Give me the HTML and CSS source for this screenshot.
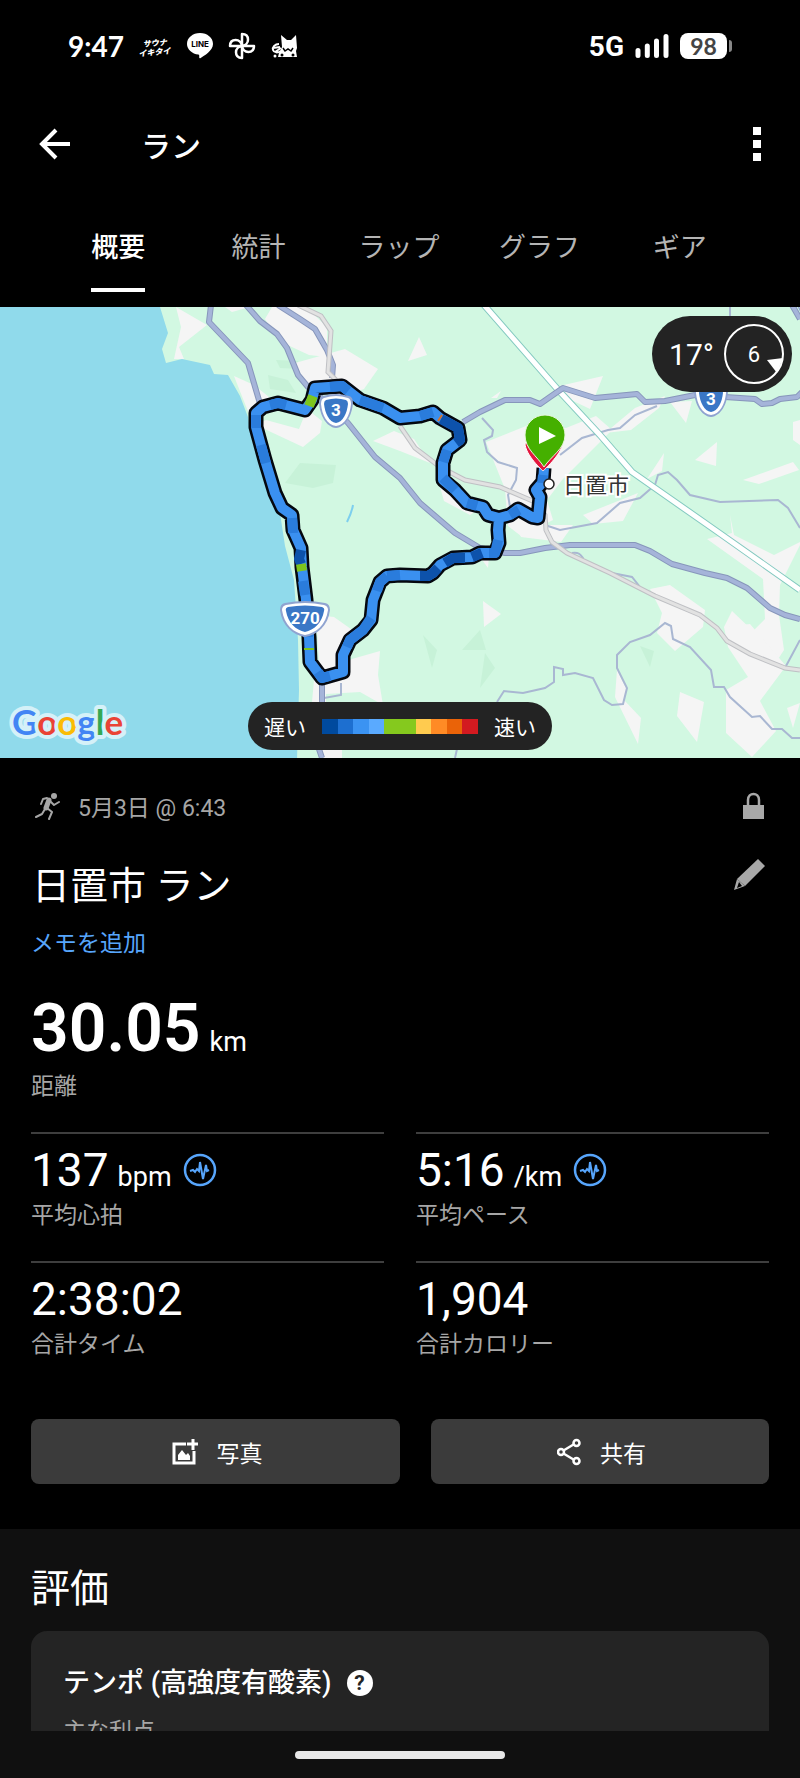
FILE: index.html
```html
<!DOCTYPE html>
<html lang="ja">
<head>
  <meta charset="UTF-8">
  <meta name="viewport" content="width=device-width, initial-scale=1.0">
  <title>日置市 ラン</title>
  <link rel="stylesheet" href="styles.css">
</head>
<body>
  <div class="app">
    <div class="status-bar">
      <div class="status-left">
        <span class="clock">9:47</span>
        <svg class="icon-sauna" width="34" height="26" viewBox="0 0 34 26">
          <g transform="rotate(-5 17 13)">
            <text x="5" y="13">サウナ</text>
            <text x="0" y="22">イキタイ</text>
          </g>
        </svg>
        <svg class="icon-line" width="28" height="28" viewBox="0 0 28 28">
          <path d="M14 1C6.800 1 1 5.700 1 12c0 5.500 5 9.800 11.500 10.600 1 .3.800 1.500.7 2.600 0 .9.500 1.300 1.500.7C18 24 27 18.500 27 12 27 5.700 21.200 1 14 1z" fill="#fff"/>
          <text x="14" y="15" text-anchor="middle">LINE</text>
        </svg>
        <svg width="28" height="28" viewBox="0 0 28 28" fill="none" stroke="#fff" stroke-width="2.5" stroke-linejoin="round">
          <path d="M14 14V2c4 0 6 2.500 6 5.700S17.500 13.500 14 14z"/>
          <path d="M14 14h12c0 4-2.500 6-5.700 6S14.500 17.500 14 14z"/>
          <path d="M14 14v12c-4 0-6-2.500-6-5.700S10.500 14.500 14 14z"/>
          <path d="M14 14H2c0-4 2.500-6 5.700-6S13.500 10.500 14 14z"/>
        </svg>
        <svg width="28" height="28" viewBox="0 0 28 28">
          <path d="M11 3l6 5h4l5-5 1 13-1 3 1 6H8l1-4 3-6z" fill="#fff"/>
          <path d="M9 12c-4 0-7 3-6 6 1 3 5 3 8 1M3 16l7-1M5 20l6-4" fill="none" stroke="#fff" stroke-width="2"/>
          <path d="M13 16l2 3 3-2 3 2 2-3" fill="none" stroke="#000" stroke-width="1.5"/>
          <circle cx="12" cy="23" r="1.5"/>
          <circle cx="23" cy="23" r="1.5"/>
          <circle cx="5" cy="24" r="1.5" fill="#fff"/>
        </svg>
      </div>
      <div class="status-right">
        <span class="network">5G</span>
        <svg width="34" height="26" viewBox="0 0 34 26" stroke="#fff" stroke-width="5" stroke-linecap="round">
          <path d="M3 17.500v5M12.300 13v9.500M21.500 8v14.500M31 3.500v19"/>
        </svg>
        <span class="battery">98</span>
      </div>
    </div>

    <header class="header">
      <button class="icon-button" aria-label="戻る">
        <svg width="32" height="32" viewBox="0 0 32 32" fill="none" stroke="#fff" stroke-width="4">
          <path d="M31 16H4M17 2L3 16l14 14"/>
        </svg>
      </button>
      <h1 class="header-title">ラン</h1>
      <button class="icon-button" aria-label="メニュー">
        <svg width="8" height="36" viewBox="0 0 8 36" fill="#fff">
          <path d="M0 1h8v8H0zM0 14h8v8H0zM0 27h8v8H0z"/>
        </svg>
      </button>
    </header>

    <nav class="tabs">
      <button class="tab active">概要</button>
      <button class="tab">統計</button>
      <button class="tab">ラップ</button>
      <button class="tab">グラフ</button>
      <button class="tab">ギア</button>
    </nav>

    <div class="map">
      <svg class="map-svg" viewBox="0 307 800 451" preserveAspectRatio="xMidYMid slice">
        <defs>
          <g id="shield">
            <path d="M-13-14Q0-18 13-14 17-13 17-7C16 5 10 17 0 18-10 17-16 5-17-7Q-17-13-13-14z" fill="#8fa3d0"/>
            <path d="M-12-12Q0-16 12-12 15-11 15-6C14 5 9 15 0 16-9 15-14 5-15-6Q-15-11-12-12z" fill="#fff"/>
            <path d="M-10-10Q0-13 10-10 12-9 12-6C11 3 7 12 0 13-7 12-11 3-12-6Q-12-9-10-10z" fill="#3a77c6"/>
          </g>
          <path id="road-coast" d="M211 305l-2 17 39 41 13 44M322 683v20M319 749l3 9"/>
          <path id="road-main" d="M246 305l14 16 17 13 10 14 11 27 10 12 22 18 18 18 27 34 25 21 20 25 35 30 25 15 25 5h15l25-5 25-3h65l15 6 22 13 33 9 22 5 20 10 23 20 15 7 15 4"/>
          <path id="road-north" d="M278 305l22 14 15 10 12 21 6 15-1 13"/>
          <path id="road-east" d="M463 422l17-10 25-12h25l10 4 10-7 13-9 32 10 42-4 8 8 20-1 30-6 60 4 7 5 10-1 8-4 17-2 5-5M792 305l8 14"/>
          <path id="road-grey" d="M298 305l23 11 10 15-3 41 8 8M400 426l15 22 25 19 25 13 35 7 35 15 10 13 1 15 6 12 15 11 43 20 45 23 45 19 17 13 10 13 23 13 35 14 15 2"/>
          <path id="rail" d="M484 305l76 87 40 43 32 37 83 58 85 60"/>
          <path id="track" d="M544 468l-1 14-7 8 4 7-2 21-6-1-14-8-8 6-11 3-1 12 1 13-4 10h-15l-8 4-19 1-13 7-7 8-5 3-28-1-13 1-7 6-7 18-2 20-8 10-13 10-7 15v17l-21 6-12-16-1-25-3-37-4-33-1-19-8-18-1-15-10-7-7-15-10-33-9-33v-14l7-6 15-4 27 7 7-10 3-12 27-2 18 14 23 8 17 10 20-2 13-4 7 6 18 10 2 12-13 10-4 13v17l12 10 12 13 16 4 5 8 11 3"/>
        </defs>
        <rect x="0" y="307" width="800" height="452" fill="#d2f8e2"/>

        <!-- darker vegetation -->
        <g fill="#c7f2d8">
          <path d="M285 483l15-20 36 2-3 18-20 5z"/>
          <path d="M276 360l22 1 2 8-20-1zM268 375l20 5 8 13-26-4z"/>
          <path d="M462 650l18-20 6 20zM423 635l14 15-5 18zM640 646l14 5-4 16zM485 653l10 15-15 20z"/>
        </g>

        <!-- built-up areas -->
        <g fill="#f5f5f5">
          <path d="M176 307l31 18-28 22 5 12h-10l7-32z"/>
          <path d="M225 307h25l-18 5zM272 307h34l21 20v30l-18-2-30-14-14-22z"/>
          <path d="M295 363l50-14 33 20-14 20-24 8-32-9z"/>
          <path d="M234 376l20 9 20 16-25 13z"/>
          <path d="M256 425l10-5 33 9 8-20 15 12-2 12-17 14z"/>
          <path d="M373 441l21-10 20 8 16 24-30-12z"/>
          <path d="M408 361l11-24 8 18zM491 398l10-7-4 7z"/>
          <path d="M555 387l48-11-13 33-25-12z"/>
          <path d="M486 442l45-18 35 4 30-12 16 14-50 50-15 20 6 20-32 16-13-10-3-37z"/>
          <path d="M605 433l30-25 30-12-6 12-28 22zM670 402l22-1-6 22z"/>
          <path d="M695 460l22-18-1 24zM743 480l50-18 6 8-40 14zM793 422l7-2v25l-7-5z"/>
          <path d="M647 479l17-26-2 18zM583 515l55-22-15 28-30 3z"/>
          <path d="M440 487l4 14 26 14 15-10zM516 525h57l-12 17-40-5zM480 557l9-1-1 12z"/>
          <path d="M483 601l18 13-17 13zM730 515l4 20 40 20 26-13v3l-20 40-1 30 5 35-13 20-20-10-10-13-17-20 8-16 21 20 12-12-2-40-28-20-28-20 25-6z"/>
          <path d="M650 589l20-4 35 25-2 17-28 24-18-18 5-20z"/>
          <path d="M724 627l26-3 36 42-26 35 16 30-24 26-26-24v-43l22-13-20-30z"/>
          <path d="M617 670l10 20-3 10 17 18-3 26-23-47zM680 692l24 10-7 40-20-26zM787 708l13-5-7 25z"/>
          <path d="M316 615l18 2 24 17-7 14-9 24-22 5z"/>
          <path d="M352 659l28-8-2 24 5 30-23-13-34 2v10l-14-2 2-22 20-10zM322 750h20v8h-20z"/>
        </g>
        <path d="M353 505c-1 6-3 11-6 17" fill="none" stroke="#7dcfee" stroke-width="2"/>

        <!-- sea -->
        <path d="M0 307h160l8 26-6 16 4 14 16-4 28 6 4 9 14 1 12 21 8 21 4 23 12 40 16 33 5 33 9 34 4 60 1 50-2 70H0z" fill="#90daeb"/>

        <!-- local roads -->
        <g fill="none" stroke="#a9b7d2" stroke-width="2">
          <path d="M482 418l11 12-1 6-8 4 3 12 11 10 19 6-1 12-8 15 2 12"/>
          <path d="M560 455l22-17 26-8 12-2 15-13 22-9M730 307v10"/>
          <path d="M545 525l15 5 37-7 23-20 20-5 15-13 3-10 10-3 9 8 13 15 30 7 58-2 10 8 12 20"/>
          <path d="M497 702l7-11 19 2 22-5 9-6v-15l9 2v6l12-2 18 5 11 22 8 5 11-1 4-16-10-20v-13l13-13 20-7 15-12 6 3 2 13 17 8 21 23 3 17h10l6 10 22 20 8-1 12 13h10l10 9h8"/>
          <path d="M341 683v12l-17 3M457 749l-2 9M786 666l14-26M572 553c10-2 10 6 12 6M612 573l20 4 8 10"/>
        </g>

        <!-- railway -->
        <g fill="none">
          <use href="#rail" stroke="#83c9c0" stroke-width="7"/>
          <use href="#rail" stroke="#fff" stroke-width="5"/>
        </g>

        <!-- main roads -->
        <g fill="none" stroke="#8796bb" stroke-width="6" stroke-linejoin="round">
          <use href="#road-coast"/>
          <use href="#road-main"/>
          <use href="#road-north"/>
          <use href="#road-east"/>
        </g>
        <g fill="none" stroke="#a5b4d9" stroke-width="4" stroke-linejoin="round">
          <use href="#road-coast"/>
          <use href="#road-main"/>
          <use href="#road-north"/>
          <use href="#road-east"/>
        </g>
        <g fill="none">
          <use href="#road-grey" stroke="#bfc0c4" stroke-width="5"/>
          <use href="#road-grey" stroke="#e2e2e2" stroke-width="3"/>
        </g>

        <!-- activity track, coloured by pace -->
        <g fill="none" stroke-linejoin="round">
          <use href="#track" stroke="#05080f" stroke-width="15"/>
          <use href="#track" stroke="#3a90f0" stroke-width="10"/>
          <g stroke="#2a7cdc" stroke-width="10">
            <path d="M543 475l-1 8M519 510l-9 5M498 540l-3 13h-6M387 576l-7 6-3 9M371 618l-8 12-13 10-3 7M330 676l-8 2-4-6M308 637l-1-15M305 595l-2-14M261 445l5 18M256 428v-13M270 405l8-2 8 2M360 400l23 8M420 416l13-4M447 450l-4 12M443 478l12 12M467 503l10 3M400 575l-13 1M293 533l-1-15M330 387l12-1 6 5"/>
          </g>
          <g stroke="#0d52ab" stroke-width="10">
            <path d="M441 419l17 9 2 12-4 3M482 553l-10 4M465 558l-12 0-8 5M438 568l-5 5-5 3-8 0M301 550l-2 9 2 5"/>
          </g>
          <path d="M309 406l4-10M301 564l1 7M309 648v2" stroke="#7dc51d" stroke-width="10"/>
          <path d="M438 421l4-6" stroke="#d4732d" stroke-width="2"/>
        </g>

        <!-- road numbers -->
        <g class="road-number" text-anchor="middle">
          <use href="#shield" x="336" y="410"/>
          <text x="336" y="416">3</text>
          <use href="#shield" x="711" y="399"/>
          <text x="711" y="405">3</text>
          <use href="#shield" x="812" y="302"/>
          <g transform="translate(305 618)">
            <path d="M-20-15Q0-19 20-15 25-14 25-8C23 8 12 17 0 19-12 17-23 8-25-8Q-25-14-20-15z" fill="#8fa3d0"/>
            <path d="M-19-13Q0-17 19-13 23-12 23-8C21 7 11 15 0 17-11 15-21 7-23-8Q-23-12-19-13z" fill="#fff"/>
            <path d="M-17-11Q0-14 17-11 20-10 19-7C17 5 9 12 0 14-9 12-17 5-19-7Q-20-10-17-11z" fill="#3a77c6"/>
            <text x="0" y="6">270</text>
          </g>
        </g>

        <!-- start / finish pin -->
        <path d="M525 443c0 12 18 28 18 28s18-16 20-28z" fill="#e3173e" stroke="#fff"/>
        <path d="M545 415a20 20 0 0 1 20 20c0 14-14 21-21 32-7-11-19-18-19-32a20 20 0 0 1 20-20z" fill="#45b000" stroke="#e9f7df"/>
        <path d="M539 427v17l17-8z" fill="#fff"/>
        <circle cx="549" cy="484" r="5" fill="#fff" stroke="#222" stroke-width="1.5"/>
        <text class="place" x="563" y="493">日置市</text>

        <text class="google" x="12" y="735"><tspan fill="#4285f4">G</tspan><tspan fill="#ea4335">o</tspan><tspan fill="#fbbc04">o</tspan><tspan fill="#4285f4">g</tspan><tspan fill="#34a853">l</tspan><tspan fill="#ea4335">e</tspan></text>
      </svg>

      <div class="weather">
        <span>17°</span>
        <svg class="wind" width="62" height="62" viewBox="0 0 62 62">
          <circle cx="31" cy="31" r="29" fill="none" stroke="#fff" stroke-width="2"/>
          <path d="M44 37l16-2-6 15z" fill="#fff"/>
          <text x="31" y="39" text-anchor="middle">6</text>
        </svg>
      </div>

      <div class="legend">
        <span>遅い</span>
        <div class="pace-scale">
          <i class="p1"></i><i class="p2"></i><i class="p3"></i><i class="p4"></i><i class="p5"></i>
          <i class="p5"></i><i class="p6"></i><i class="p7"></i><i class="p8"></i><i class="p9"></i>
        </div>
        <span>速い</span>
      </div>
    </div>

    <main class="summary">
      <div class="meta-row">
        <svg width="28" height="28" viewBox="0 0 28 28" fill="none" stroke="#a6a6a6" stroke-linecap="round" stroke-linejoin="round">
          <circle cx="19" cy="4" r="3" fill="#a6a6a6" stroke="none"/>
          <path d="M14 8l-3 8" stroke-width="5"/>
          <path d="M12 6L8 7l-2 5M15 9l4 4 5-3M12 16l5 4-3 7" stroke-width="2"/>
          <path d="M10 17l-3 5-6 3" stroke-width="2"/>
        </svg>
        <span class="date">5月3日 @ 6:43</span>
        <svg class="lock" width="22" height="28" viewBox="0 0 22 28">
          <path d="M1 13h21v14H1z" fill="#a8a8a8"/>
          <path d="M6 13V8c0-8 11-8 11 0v5" fill="none" stroke="#a8a8a8" stroke-width="2.5"/>
        </svg>
      </div>

      <div class="title-row">
        <h2 class="title">日置市 ラン</h2>
        <button class="icon-button" aria-label="編集">
          <svg width="34" height="34" viewBox="0 0 34 34">
            <path d="M26 1l7 7-20 20-8-7z" fill="#a8a8a8"/>
            <path d="M5 21l8 7-11 4zm2 3l-2 6 5-2z" fill="#a8a8a8" fill-rule="evenodd"/>
          </svg>
        </button>
      </div>

      <a class="note-link" href="#">メモを追加</a>

      <div class="distance">30.05 <span class="unit">km</span></div>
      <div class="label">距離</div>

      <div class="stats">
        <div class="stat">
          <div class="value">137 <span class="unit">bpm</span>
            <svg class="chart-icon" width="34" height="34" viewBox="0 0 34 34" fill="none" stroke="#57a5fb">
              <circle cx="17" cy="17" r="15" stroke-width="2.5"/>
              <path d="M7 18l3-1 2 2 2-3 2 2 1-9 3 17 3-14 1 6 2-1" stroke-width="2"/>
            </svg>
          </div>
          <div class="label">平均心拍</div>
        </div>
        <div class="stat">
          <div class="value">5:16 <span class="unit">/km</span>
            <svg class="chart-icon" width="34" height="34" viewBox="0 0 34 34" fill="none" stroke="#57a5fb">
              <circle cx="17" cy="17" r="15" stroke-width="2.5"/>
              <path d="M7 18l3-1 2 2 2-3 2 2 1-9 3 17 3-14 1 6 2-1" stroke-width="2"/>
            </svg>
          </div>
          <div class="label">平均ペース</div>
        </div>
        <div class="stat">
          <div class="value">2:38:02</div>
          <div class="label">合計タイム</div>
        </div>
        <div class="stat">
          <div class="value">1,904</div>
          <div class="label">合計カロリー</div>
        </div>
      </div>

      <div class="actions">
        <button class="action">
          <svg width="28" height="28" viewBox="0 0 28 28">
            <path d="M15 6H3v19h20V13" fill="none" stroke="#fff" stroke-width="3"/>
            <path d="M22 1v11M16 6h11" stroke="#fff" stroke-width="3"/>
            <path d="M7 22v-5l4-5 4 5 2-2 2 3v4z" fill="#fff"/>
          </svg>
          写真
        </button>
        <button class="action">
          <svg width="26" height="28" viewBox="0 0 26 28" fill="none" stroke="#fff" stroke-width="2.5">
            <path d="M6.500 12.500l10-6M6.500 15.500l10 6"/>
            <circle cx="4" cy="14" r="3"/>
            <circle cx="19.500" cy="5" r="3"/>
            <circle cx="19.500" cy="23" r="3"/>
          </svg>
          共有
        </button>
      </div>
    </main>

    <section class="assessment">
      <h2 class="section-title">評価</h2>
      <div class="card">
        <div class="card-title">
          <span>テンポ (高強度有酸素)</span>
          <button class="help" aria-label="ヘルプ">?</button>
        </div>
        <div class="card-text">主な利点</div>
      </div>
    </section>

    <div class="nav-bar"><div class="handle"></div></div>
  </div>
</body>
</html>
```
FILE: styles.css
```css
* {
  box-sizing: border-box;
}

body {
  margin: 0;
  background-color: #000;
  color: #fff;
  font-family: Roboto, "Noto Sans CJK JP", sans-serif;
  font-size: 23px;
}

button {
  background: none;
  border: none;
  padding: 0;
  color: inherit;
  font: inherit;
  cursor: pointer;
}

svg {
  display: block;
  flex-shrink: 0;
}

.app {
  display: flex;
  flex-direction: column;
  height: 100vh;
  overflow: hidden;
}

.app > * {
  flex-shrink: 0;
}

/* status bar */
.status-bar {
  display: flex;
  justify-content: space-between;
  align-items: center;
  height: 92px;
  padding: 0 68px;
  font-family: Lato, sans-serif;
  font-weight: 700;
}

.status-left {
  display: flex;
  align-items: center;
  gap: 14px;
}

.status-right {
  display: flex;
  align-items: center;
  gap: 11px;
}

.clock {
  font-size: 28px;
}

.icon-sauna text {
  fill: #fff;
  font: italic 900 8px "Noto Sans CJK JP", sans-serif;
}

.icon-line text {
  fill: #000;
  font: 700 8px Inter, sans-serif;
}

.network {
  font-family: Roboto, sans-serif;
  font-size: 28px;
}

.battery {
  position: relative;
  width: 47px;
  height: 26px;
  margin-right: 5px;
  border-radius: 8px;
  background-color: #fff;
  color: #444;
  font-size: 23px;
  line-height: 26px;
  text-align: center;
}

.battery::after {
  content: "";
  position: absolute;
  right: -5px;
  top: 7px;
  width: 3px;
  height: 12px;
  border-radius: 0 3px 3px 0;
  background-color: #888;
}

/* header */
.header {
  display: flex;
  align-items: center;
  height: 104px;
  padding: 0 39px;
}

.header-title {
  flex: 1;
  margin: 0 0 0 70px;
  font-size: 30px;
  font-weight: 500;
}

.tabs {
  display: grid;
  grid-template-columns: repeat(5, 1fr);
  justify-items: center;
  padding: 0 50px 15px 48px;
}

.tab {
  padding: 32px 0 20px;
  border-bottom: 4px solid transparent;
  color: #b4b4b4;
  font-size: 27px;
  line-height: 40px;
}

.tab.active {
  border-color: #fff;
  color: #fff;
  font-weight: 500;
}

/* map */
.map {
  position: relative;
}

.map-svg {
  width: 100%;
  height: 451px;
}

.road-number {
  fill: #fff;
  font-size: 17px;
  font-weight: 700;
}

.place {
  fill: #333;
  stroke: #fff;
  stroke-width: 4px;
  paint-order: stroke;
  font-size: 22px;
}

.google {
  stroke: #d5f1f8;
  stroke-width: 8px;
  stroke-linejoin: round;
  paint-order: stroke;
  font-family: Lato, sans-serif;
  font-size: 35px;
  font-weight: 700;
}

.weather {
  position: absolute;
  top: 9px;
  right: 8px;
  display: flex;
  align-items: center;
  gap: 9px;
  height: 76px;
  padding: 0 7px 0 17px;
  border-radius: 38px;
  background-color: #232323;
  font-size: 30px;
}

.wind text {
  fill: #fff;
  font-size: 22px;
}

.legend {
  position: absolute;
  left: 50%;
  bottom: 8px;
  transform: translateX(-50%);
  display: flex;
  align-items: center;
  gap: 16px;
  height: 48px;
  padding: 0 16px;
  border-radius: 24px;
  background-color: #232323;
  font-size: 21px;
  white-space: nowrap;
}

.pace-scale {
  display: grid;
  grid-template-columns: repeat(10, 1fr);
  width: 156px;
  height: 15px;
}

.p1 { background-color: #004a9e; }
.p2 { background-color: #1d6fd0; }
.p3 { background-color: #3b93f2; }
.p4 { background-color: #5aaaff; }
.p5 { background-color: #85c91e; }
.p6 { background-color: #ffcb4f; }
.p7 { background-color: #ff8b25; }
.p8 { background-color: #ea6308; }
.p9 { background-color: #d31a20; }

/* activity summary */
.summary {
  padding: 31px 31px 45px;
}

.meta-row {
  display: flex;
  align-items: center;
  gap: 15px;
  height: 34px;
  padding: 0 5px 0 4px;
}

.date {
  color: #a6a6a6;
}

.lock {
  margin-left: auto;
}

.title-row {
  display: flex;
  justify-content: space-between;
  align-items: flex-start;
  margin-top: 35px;
  padding: 0 3px 0 1px;
}

.title {
  margin: 0;
  font-size: 38px;
  font-weight: 400;
  line-height: 56px;
}

.note-link {
  display: block;
  margin-top: 14px;
  color: #57a5fb;
  line-height: 32px;
  text-decoration: none;
}

.distance {
  display: flex;
  align-items: baseline;
  gap: 9px;
  margin-top: 29px;
  font-size: 66px;
  font-weight: 600;
  line-height: 80px;
}

.unit {
  font-size: 27px;
  font-weight: 400;
  line-height: 1;
}

.label {
  margin-top: 2px;
  color: #a6a6a6;
  line-height: 32px;
}

.stats {
  display: grid;
  grid-template-columns: 1fr 1fr;
  column-gap: 32px;
  margin-top: 29px;
}

.stat {
  height: 129px;
  padding-top: 8px;
  border-top: 2px solid #3e3e3e;
}

.value {
  display: flex;
  align-items: baseline;
  gap: 9px;
  font-size: 46px;
  line-height: 56px;
}

.chart-icon {
  align-self: center;
  margin-left: 2px;
}

.actions {
  display: grid;
  grid-template-columns: 12fr 11fr;
  gap: 31px;
  margin-top: 29px;
}

.action {
  display: flex;
  justify-content: center;
  align-items: center;
  gap: 17px;
  height: 65px;
  padding-left: 3px;
  border-radius: 8px;
  background-color: #3b3b3b;
}

/* assessment */
.assessment {
  flex: 1 1 0;
  min-height: 0;
  overflow: hidden;
  padding: 32px 31px 0;
  background-color: #101010;
}

.section-title {
  margin: 0 0 14px;
  font-size: 39px;
  font-weight: 400;
  line-height: 56px;
}

.card {
  padding: 32px;
  border-radius: 16px;
  background-color: #242424;
}

.card-title {
  display: flex;
  align-items: center;
  gap: 15px;
  font-size: 27px;
  font-weight: 500;
  line-height: 40px;
}

.help {
  width: 26px;
  height: 26px;
  border-radius: 50%;
  background-color: #fff;
  color: #242424;
  font-size: 21px;
  font-weight: 700;
  line-height: 26px;
}

.card-text {
  margin-top: 13px;
  color: #a6a6a6;
  line-height: 32px;
}

.nav-bar {
  display: flex;
  justify-content: center;
  align-items: center;
  height: 47px;
  background-color: #101010;
}

.handle {
  width: 210px;
  height: 8px;
  border-radius: 4px;
  background-color: #e8e8e8;
}
```
